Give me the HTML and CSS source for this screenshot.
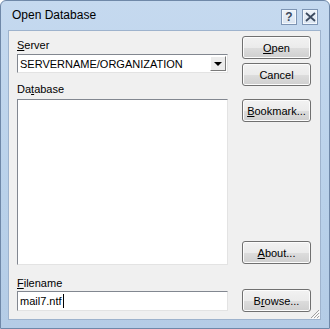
FILE: index.html
```html
<!DOCTYPE html>
<html lang="en">
<head>
    <meta charset="UTF-8">
    <title>Open Database</title>
    <link rel="stylesheet" href="styles.css">
</head>
<body>
    <div class="window">
        <div class="titlebar">
            <span class="title">Open Database</span>
            <div class="caption-buttons">
                <span class="cap-btn help">?</span>
                <span class="cap-btn close">
                    <svg width="11" height="10" viewBox="0 0 11 10"><path d="M1 1 L10 9 M10 1 L1 9" stroke="#3c4a5e" stroke-width="1.8" fill="none"/></svg>
                </span>
            </div>
        </div>
        <div class="client">
            <div class="main-col">
                <label class="field-label"><u>S</u>erver</label>
                <div class="combo">
                    <span class="combo-text">SERVERNAME/ORGANIZATION</span>
                    <span class="combo-arrow"><span class="tri"></span></span>
                </div>
                <label class="field-label db-label">Da<u>t</u>abase</label>
                <div class="listbox"></div>
                <label class="field-label file-label"><u>F</u>ilename</label>
                <div class="textbox">mail7.ntf<span class="caret"></span></div>
            </div>
            <div class="button-col">
                <button class="btn"><u>O</u>pen</button>
                <button class="btn btn-cancel">Cancel</button>
                <button class="btn btn-bookmark"><u>B</u>ookmark...</button>
                <div class="spacer"></div>
                <button class="btn"><u>A</u>bout...</button>
                <button class="btn btn-browse">B<u>r</u>owse...</button>
            </div>
            <svg class="grip" width="10" height="10" viewBox="0 0 10 10">
                <path d="M9 1 L1 9 M9 4 L4 9 M9 7 L7 9" stroke="#a0a0a0" stroke-width="1" fill="none"/>
                <path d="M10 2 L2 10 M10 5 L5 10 M10 8 L8 10" stroke="#ffffff" stroke-width="1" fill="none"/>
            </svg>
        </div>
    </div>
</body>
</html>
```

FILE: styles.css
```css
body {
    margin: 0;
    font-family: 'Liberation Sans', Arial, sans-serif;
    font-size: 11px;
    color: #000;
    background: #fff;
}
.window {
    width: 330px;
    height: 329px;
    box-sizing: border-box;
    border: 1px solid #6f88a8;
    border-radius: 6px 6px 0 0;
    background: linear-gradient(#c5d9ef, #b9d1ea 60%, #b4cce6);
    display: flex;
    flex-direction: column;
    padding: 0 8px 8px 7px;
}
.titlebar {
    height: 29px;
    display: flex;
    align-items: flex-start;
    justify-content: space-between;
}
.title {
    font-size: 12px;
    margin: 7px 0 0 4px;
    color: #000;
}
.caption-buttons {
    display: flex;
    gap: 5px;
    margin: 8px 3px 0 0;
}
.cap-btn {
    width: 14px;
    height: 14px;
    border: 1px solid #7d94b3;
    box-shadow: inset 0 0 0 1px #f4f8fc;
    background: linear-gradient(#eef3f9, #d9e4f1);
    display: flex;
    align-items: center;
    justify-content: center;
    box-sizing: content-box;
}
.help {
    font-weight: bold;
    font-size: 12px;
    color: #3c4a5e;
    line-height: 14px;
}
.client {
    flex: 1;
    position: relative;
    display: flex;
    background: #f0f0f0;
    border: 1px solid #9eb3cd;
    padding: 0 8px 0 8px;
}
.main-col {
    width: 211px;
    display: flex;
    flex-direction: column;
    padding: 8px 0 8px 0;
}
.field-label {
    display: block;
    height: 13px;
    line-height: 13px;
    margin-bottom: 2px;
}
.db-label {
    margin-top: 10px;
    margin-bottom: 3px;
}
.file-label {
    margin-top: 12px;
    margin-bottom: 1px;
}
.combo, .listbox, .textbox {
    background: #fff;
    border: 1px solid;
    border-color: #828790 #e3e3e3 #e3e3e3 #828790;
    box-sizing: border-box;
}
.combo {
    height: 19px;
    display: flex;
    align-items: center;
    justify-content: space-between;
    padding: 0 1px 0 2px;
}
.combo-arrow {
    width: 16px;
    height: 15px;
    box-sizing: border-box;
    border: 1px solid;
    border-color: #ffffff #7a7a7a #7a7a7a #ffffff;
    background: #ececec;
    display: flex;
    align-items: center;
    justify-content: center;
}
.tri {
    width: 0;
    height: 0;
    border-left: 4px solid transparent;
    border-right: 4px solid transparent;
    border-top: 4px solid #000;
}
.listbox {
    flex: 1;
}
.textbox {
    height: 20px;
    line-height: 18px;
    padding-left: 2px;
}
.caret {
    display: inline-block;
    width: 1px;
    height: 14px;
    background: #000;
    vertical-align: -3px;
    margin-left: 1px;
}
.button-col {
    width: 69px;
    margin-left: 14px;
    display: flex;
    flex-direction: column;
    padding: 5px 0 7px 0;
}
.btn {
    height: 23px;
    font: inherit;
    color: #000;
    border: 1px solid #707070;
    border-radius: 3px;
    box-shadow: inset 0 0 0 1px #fcfcfc;
    background: linear-gradient(#f2f2f2 0%, #ebebeb 50%, #dddddd 51%, #cfcfcf 100%);
    padding: 0;
}
.btn-cancel {
    margin-top: 4px;
}
.btn-bookmark {
    margin-top: 13px;
}
.spacer {
    flex: 1;
}
.btn-browse {
    margin-top: 25px;
}
.grip {
    position: absolute;
    right: 0;
    bottom: 0;
}
```
